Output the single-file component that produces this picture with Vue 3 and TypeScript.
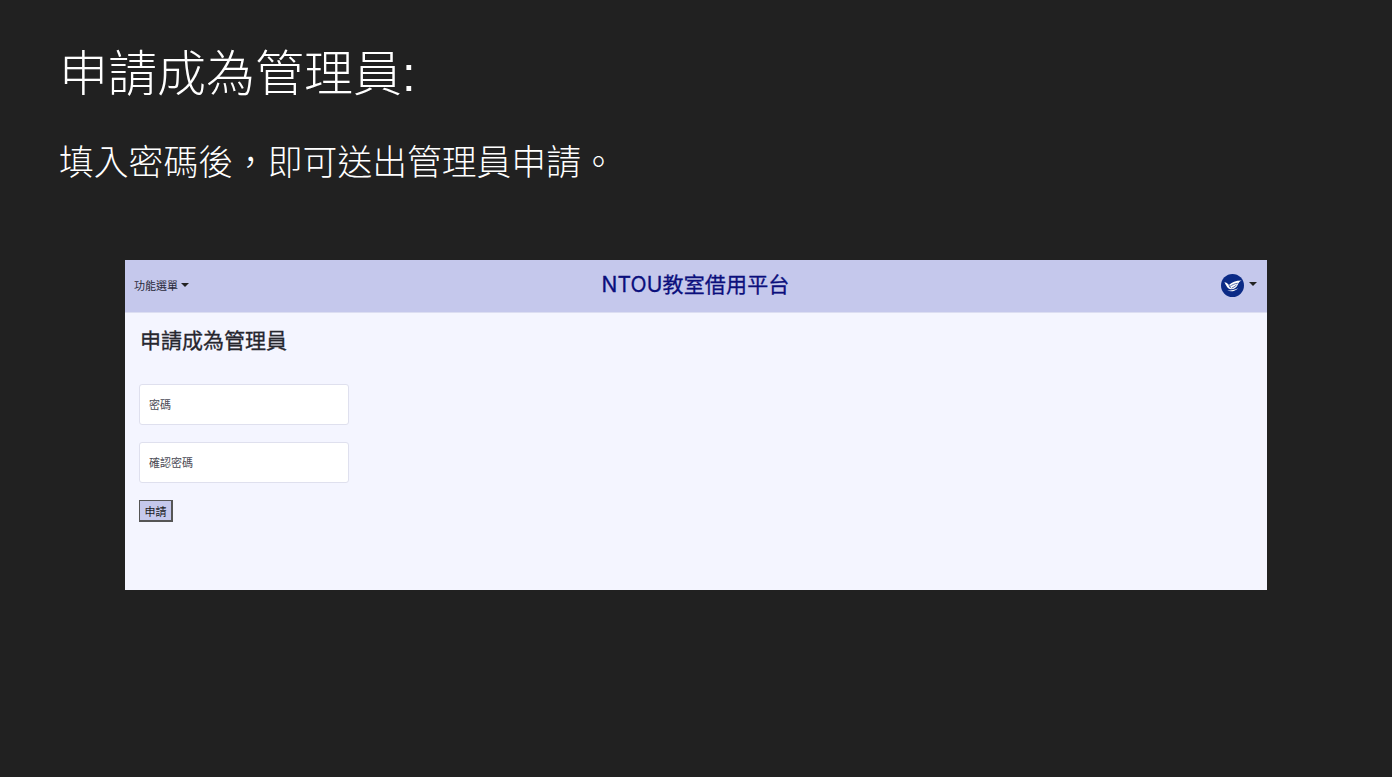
<template>
  <div class="slide">
    <h1 class="slide-title">申請成為管理員:</h1>
    <p class="slide-text">填入密碼後，即可送出管理員申請。</p>
    <div class="shot">
      <header class="navbar">
        <div class="menu">功能選單<span class="caret"></span></div>
        <div class="brand">NTOU教室借用平台</div>
        <div class="user">
          <svg class="avatar" viewBox="0 0 24 24" width="23" height="23">
            <circle cx="12" cy="12" r="12" fill="#0b2a86" />
            <path d="M3.500 8.500c1.900 0 3.400 1.200 4.800 3C11 8.600 15.500 6.800 21.500 6.800c-2.200 1-3.400 2.600-4 4.400-1.500 3.300-4.200 5-7.300 4.700C6.800 15.600 5.200 11.300 3.500 8.500z" fill="#fff" />
            <path d="M8.300 11.500c.4 1.200 1 2.300 1.900 3.100M8.800 13.300c2.600-2 5.400-3.200 8.700-3.700M11 14.800c1.900-.8 3.600-1.900 5.200-3.300" stroke="#0b2a86" stroke-width="0.700" fill="none" />
            <path d="M6.500 17.300c4 1.500 8.500.6 11.500-2.500-3.300 1.500-7.400 2.300-11.500 2.500z" fill="#fff" />
          </svg>
          <span class="caret"></span>
        </div>
      </header>
      <main class="content">
        <h2 class="form-title">申請成為管理員</h2>
        <form class="form" @submit.prevent>
          <input class="field" type="password" placeholder="密碼" />
          <input class="field" type="password" placeholder="確認密碼" />
          <button class="submit" type="submit">申請</button>
        </form>
      </main>
    </div>
  </div>
</template>

<script setup lang="ts">
</script>

<style>
html,
body {
  margin: 0;
  background: #212121;
}
</style>

<style scoped>
.slide {
  box-sizing: border-box;
  height: 777px;
  overflow: hidden;
  background: #212121;
  padding: 43px 125px 0 60px;
  font-family: "Liberation Sans", "Noto Sans CJK TC", sans-serif;
}

.slide-title {
  margin: 0 0 0 -1px;
  font-size: 49px;
  line-height: 62px;
  font-weight: 300;
  color: #fff;
}

.slide-text {
  margin: 36px 0 0 -1px;
  font-size: 34.800px;
  line-height: 44px;
  font-weight: 300;
  color: #fff;
}

.shot {
  margin: 75px 0 0 65px;
  width: 1142px;
  height: 330px;
  background: #f4f5ff;
}

.navbar {
  box-sizing: border-box;
  height: 53px;
  display: grid;
  grid-template-columns: 1fr auto 1fr;
  align-items: center;
  padding: 0 10px 2px 9px;
  background: #c5c8ec;
  border-bottom: 1px solid #dcdef2;
}

.menu {
  font-size: 11px;
  color: #2a2a3a;
  display: flex;
  align-items: center;
}

.caret {
  display: inline-block;
  margin-left: 3px;
  border-top: 4px solid #222;
  border-left: 4px solid transparent;
  border-right: 4px solid transparent;
}

.brand {
  font-family: "Inter", "Noto Sans CJK TC", sans-serif;
  font-size: 21px;
  line-height: 26px;
  font-weight: 400;
  letter-spacing: 0.150px;
  -webkit-text-stroke: 0.300px #0b0f7c;
  color: #0b0f7c;
}

.user {
  justify-self: end;
  display: flex;
  align-items: flex-start;
  gap: 2px;
}

.user .caret {
  margin-top: 8px;
  margin-left: 3px;
}

.avatar {
  display: block;
}

.content {
  padding: 13px 14px;
}

.form-title {
  margin: 0 0 0 1px;
  font-family: "Noto Sans CJK TC", sans-serif;
  font-size: 21px;
  line-height: 26px;
  font-weight: 400;
  -webkit-text-stroke: 0.300px #26262e;
  color: #26262e;
}

.form {
  margin-top: 32px;
  display: flex;
  flex-direction: column;
  align-items: flex-start;
}

.field {
  box-sizing: border-box;
  width: 210px;
  height: 41px;
  margin-bottom: 17px;
  padding: 0 9px;
  background: #fff;
  border: 1px solid #dfe0ee;
  border-radius: 3px;
  outline: none;
  font-family: inherit;
  font-size: 11px;
}

.field::placeholder {
  color: #4a4a55;
  opacity: 1;
}

.submit {
  box-sizing: border-box;
  width: 34px;
  height: 22px;
  padding: 0;
  background: #c5c8ec;
  border-style: solid;
  border-width: 1px 2px 2px 1px;
  border-color: #555;
  font-family: inherit;
  font-size: 11px;
  color: #1a1a22;
}
</style>
